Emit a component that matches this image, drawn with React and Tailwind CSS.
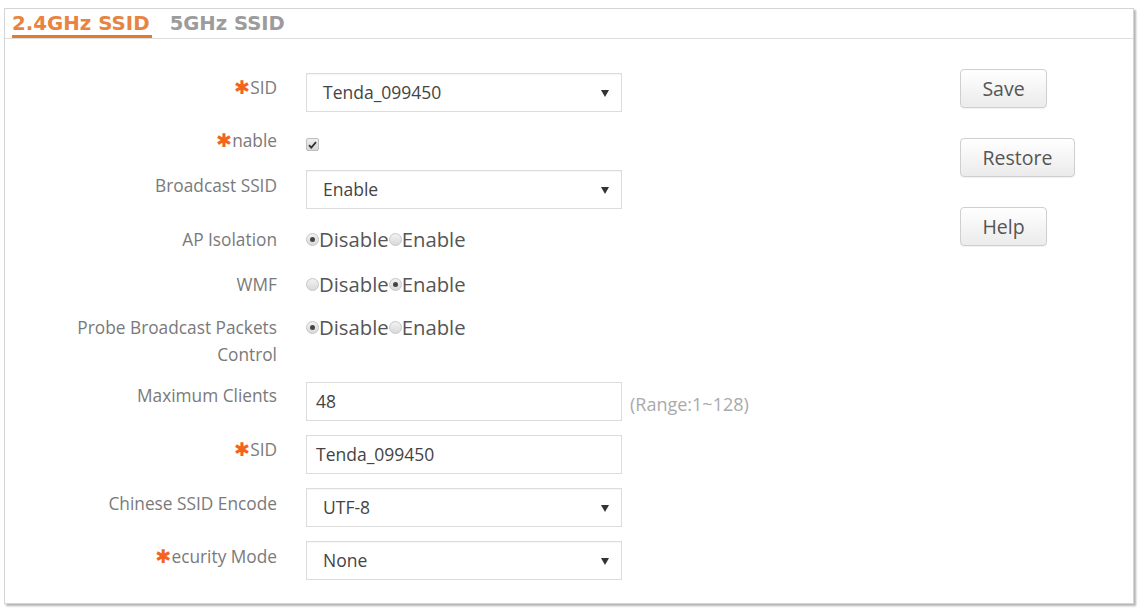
import React from 'react'

const font = { fontFamily: '"Open Sans", "Noto Sans", sans-serif' }

function Star() {
  return <span className="text-[#f2651c] text-[19px] font-bold leading-none" style={{ fontFamily: '"DejaVu Sans", sans-serif' }}>✱</span>
}

function Label({ star, children, className = '' }) {
  return (
    <div className={`w-[272px] shrink-0 text-right text-[17.3px] leading-[20px] text-[#7a7a7a] ${className}`}>
      {star && <Star />}{children}
    </div>
  )
}

function SelectBox({ value }) {
  return (
    <div className="w-[316px] h-[39px] border border-[#dcdcdc] bg-white flex items-center pl-[16px] pr-[12px] text-[17.5px] text-[#444] shadow-[inset_0_1px_1px_rgba(0,0,0,0.04)]">
      <span className="flex-1">{value}</span>
      <svg width="8" height="8" viewBox="0 0 8 8"><path d="M0 1h8L4 8z" fill="#333" /></svg>
    </div>
  )
}

function TextBox({ value }) {
  return (
    <div className="w-[316px] h-[39px] border border-[#dcdcdc] bg-white flex items-center pl-[9px] text-[17.5px] text-[#444]">
      {value}
    </div>
  )
}

function Radio({ on }) {
  return (
    <span className="w-[13px] h-[13px] rounded-full border border-[#c6c6c6] bg-gradient-to-b from-[#f2f2f2] to-[#d9d9d9] flex items-center justify-center">
      {on && <span className="w-[5px] h-[5px] rounded-full bg-[#444]" />}
    </span>
  )
}

function RadioPair({ sel }) {
  return (
    <div className="self-start flex items-center text-[20.3px] text-[#555] leading-[27px]">
      <Radio on={sel === 0} />
      <span>Disable</span>
      <Radio on={sel === 1} />
      <span>Enable</span>
    </div>
  )
}

function Btn({ children, w }) {
  return (
    <button className={`${w} h-[39px] rounded-[4px] border border-[#cfcfcf] bg-gradient-to-b from-white to-[#ebebeb] text-[19.5px] text-[#555] leading-none shadow-[0_1px_1px_rgba(0,0,0,0.06)]`}>
      {children}
    </button>
  )
}

export default function App() {
  return (
    <div className="w-[1142px] h-[609px] bg-white pt-[8px] pl-[4px]" style={font}>
      <div className="w-[1130px] h-[596px] border border-[#d4d4d4] shadow-[2px_2px_2px_rgba(0,0,0,0.3)] flex flex-col">
        <div className="h-[30px] border-b border-[#dedede] flex items-end pl-[7px] gap-[18px] shrink-0" style={{ fontFamily: '"DejaVu Sans", sans-serif' }}>
          <div className="h-full flex items-center border-b-[3px] border-[#e17c2c] text-[#e8843f] text-[19.8px] font-bold leading-none pt-[4px] pr-[2px]">2.4GHz SSID</div>
          <div className="h-full flex items-center text-[#9c9c9c] text-[19.6px] font-bold leading-none pt-[1px]">5GHz SSID</div>
        </div>
        <div className="flex flex-1">
          <div className="w-[955px] shrink-0 flex flex-col gap-[29px]">
            <div className="flex gap-[29px] mt-[34px]">
              <Label star className="pt-[5px]">SID</Label>
              <SelectBox value="Tenda_099450" />
            </div>
            <div className="flex gap-[29px] -mt-[10px]">
              <Label star>nable</Label>
              <span className="mt-[7px] w-[13px] h-[13px] rounded-[2px] border border-[#bdbdbd] bg-gradient-to-b from-[#efefef] to-[#d6d6d6] flex items-center justify-center">
                <svg width="9" height="8" viewBox="0 0 9 8"><path d="M1 4.2l2.3 2.4L8 1.2" stroke="#333" strokeWidth="1.8" fill="none" /></svg>
              </span>
            </div>
            <div className="flex gap-[29px] -mt-[10px]">
              <Label className="pt-[6px]">Broadcast SSID</Label>
              <SelectBox value="Enable" />
            </div>
            <div className="flex gap-[29px] -mt-[12px]">
              <Label className="pt-[4px]">AP Isolation</Label>
              <RadioPair sel={0} />
            </div>
            <div className="flex gap-[29px] -mt-[11px]">
              <Label className="pt-[4px]">WMF</Label>
              <RadioPair sel={1} />
            </div>
            <div className="flex gap-[29px] -mt-[13px]">
              <Label className="!leading-[27px]">Probe Broadcast Packets<br />Control</Label>
              <RadioPair sel={0} />
            </div>
            <div className="flex flex-col gap-[14px] -mt-[15px]">
              <div className="flex gap-[29px]">
                <Label className="pt-[4px]">Maximum Clients</Label>
                <TextBox value="48" />
                <span className="-ml-[21px] pt-[9px] text-[18px] text-[#aaa]">(Range:1~128)</span>
              </div>
              <div className="flex gap-[29px]">
                <Label star className="pt-[5px]">SID</Label>
                <TextBox value="Tenda_099450" />
              </div>
              <div className="flex gap-[29px]">
                <Label className="pt-[6px]">Chinese SSID Encode</Label>
                <SelectBox value="UTF-8" />
              </div>
              <div className="flex gap-[29px]">
                <Label star className="pt-[6px]">ecurity Mode</Label>
                <SelectBox value="None" />
              </div>
            </div>
          </div>
          <div className="flex flex-col items-start gap-[30px] pt-[30px]">
            <Btn w="w-[87px]">Save</Btn>
            <Btn w="w-[115px]">Restore</Btn>
            <Btn w="w-[87px]">Help</Btn>
          </div>
        </div>
      </div>
    </div>
  )
}
